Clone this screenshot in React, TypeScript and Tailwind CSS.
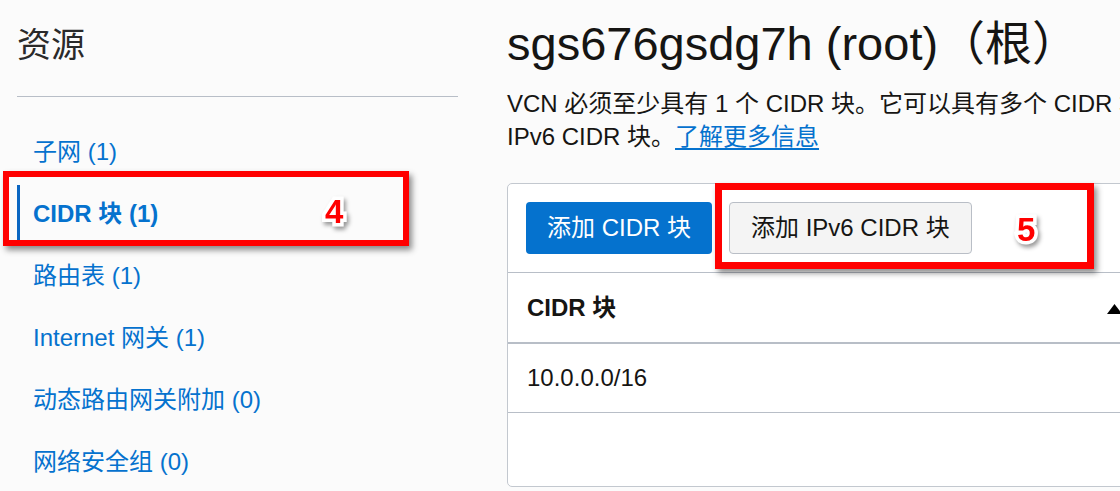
import { ReactNode } from 'react'

const font = 'font-["Liberation_Sans","Noto_Sans_CJK_SC",sans-serif]'

const navItems = [
  { id: 'subnets', label: '子网 (1)' },
  { id: 'cidr', label: 'CIDR 块 (1)', active: true },
  { id: 'routes', label: '路由表 (1)' },
  { id: 'igw', label: 'Internet 网关 (1)' },
  { id: 'drg', label: '动态路由网关附加 (0)' },
  { id: 'nsg', label: '网络安全组 (0)' },
]

function Callout({ className, children }: { className: string; children?: ReactNode }) {
  return (
    <div className={`absolute border-[6px] border-[#ff0000] shadow-[3px_4px_6px_rgba(0,0,0,0.45)] ${className}`}>
      {children}
    </div>
  )
}

function Badge({ n, className }: { n: string; className: string }) {
  return (
    <span
      className={`absolute text-[33px] leading-none font-bold text-[#ff0000] [-webkit-text-stroke:7px_white] [paint-order:stroke_fill] drop-shadow-[2px_3px_2px_rgba(0,0,0,0.4)] ${className}`}
    >
      {n}
    </span>
  )
}

export default function App() {
  return (
    <div className={`relative w-[1120px] h-[491px] overflow-hidden bg-[#fbfbfb] text-[#161513] ${font}`}>
      <div className="flex pl-[17px]">
        {/* sidebar */}
        <aside className="w-[441px] shrink-0 pt-[28px]">
          <h2 className="text-[34px] leading-[34px] font-normal text-[#2a2a2a]">资源</h2>
          <div className="mt-[34px] h-px bg-[#b8bec7]" />
          <nav className="mt-[26px] flex flex-col gap-[4px]">
            {navItems.map((item) => (
              <a
                key={item.id}
                className={`h-[58px] flex items-center pl-[13px] text-[24px] text-[#0572ce] border-l-[3px] ${
                  item.active ? 'border-[#0a66c2] font-bold' : 'border-transparent'
                }`}
              >
                {item.label}
              </a>
            ))}
          </nav>
        </aside>

        {/* main */}
        <main className="ml-[49px] w-[700px] shrink-0 pt-[16px]">
          <h1 className="text-[47px] leading-[56px] font-normal whitespace-nowrap">
            sgs676gsdg7h (root)（根）
          </h1>
          <p className="mt-[15px] text-[24px] leading-[33px] whitespace-nowrap">
            VCN 必须至少具有 1 个 CIDR 块。它可以具有多个 CIDR 块和一个
            <br />
            IPv6 CIDR 块。
            <a className="text-[#0572ce] underline underline-offset-[3px]">了解更多信息</a>
          </p>

          <div className="mt-[30px] w-[640px] h-[304px] bg-white border border-[#c3c8cf] rounded-[5px]">
            <div className="flex gap-[17px] px-[18px] py-[18px] border-b border-[#b8bec7]">
              <button className="h-[52px] px-[21px] rounded-[4px] bg-[#0572ce] text-white text-[24px]">
                添加 CIDR 块
              </button>
              <button className="h-[52px] px-[21px] rounded-[4px] bg-[#f4f4f4] border border-[#b9bec6] text-[#161513] text-[24px]">
                添加 IPv6 CIDR 块
              </button>
            </div>
            <div className="h-[71px] flex items-center justify-between pl-[19px] pr-[24px] border-b-2 border-[#b8bec7]">
              <span className="text-[24px] font-bold">CIDR 块</span>
              <svg width="15" height="10" viewBox="0 0 15 10" className="mt-[2px]">
                <path d="M7.5 0 L15 10 L0 10 Z" fill="#000" />
              </svg>
            </div>
            <div className="h-[69px] flex items-center pl-[19px] border-b border-[#b8bec7] text-[24px]">
              10.0.0.0/16
            </div>
          </div>
        </main>
      </div>

      {/* annotations */}
      <Callout className="left-[3px] top-[171px] w-[406px] h-[75px]" />
      <Badge n="4" className="left-[325px] top-[195px]" />
      <Callout className="left-[715px] top-[183px] w-[379px] h-[86px] border-[7px]" />
      <Badge n="5" className="left-[1017px] top-[213px]" />
    </div>
  )
}
